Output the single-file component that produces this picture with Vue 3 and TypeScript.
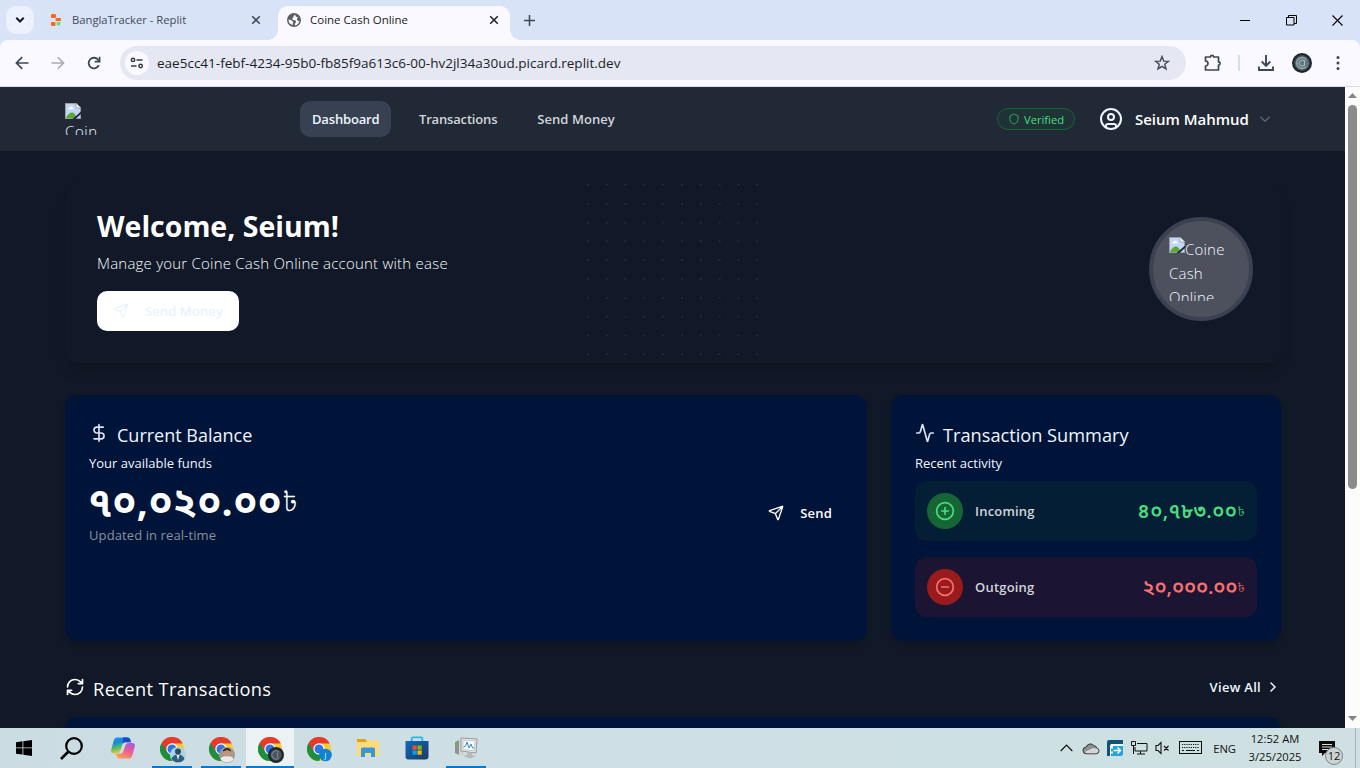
<script setup lang="ts">
interface Flow {
  label: string
  amount: string
  kind: 'in' | 'out'
}

interface Task {
  id: string
  icon: 'chrome' | 'folder' | 'store' | 'monitor'
  badge?: 'man' | 'face' | 'coin' | 'letter'
  state?: 'open' | 'active'
}

const navItems: string[] = ['Dashboard', 'Transactions', 'Send Money']

const flows: Flow[] = [
  { label: 'Incoming', amount: '৪০,৭৮৩.০০', kind: 'in' },
  { label: 'Outgoing', amount: '২০,০০০.০০', kind: 'out' },
]

const tasks: Task[] = [
  { id: 'c1', icon: 'chrome', badge: 'man', state: 'open' },
  { id: 'c2', icon: 'chrome', badge: 'face', state: 'open' },
  { id: 'c3', icon: 'chrome', badge: 'coin', state: 'active' },
  { id: 'c4', icon: 'chrome', badge: 'letter' },
  { id: 'files', icon: 'folder' },
  { id: 'store', icon: 'store' },
  { id: 'perf', icon: 'monitor', state: 'open' },
]
</script>

<template>
  <div class="screen">
    <!-- Shared symbols -->
    <svg class="defs" width="0" height="0">
      <defs>
        <symbol id="broken" viewBox="0 0 16 16">
          <path d="M0 0h11l5 5v11H0z" fill="#9a9d9c" />
          <path d="M1 1h9.500L15 5.500V15H1z" fill="#c3d6f7" />
          <path d="M3 6.200q0-1.500 1.600-1.400Q5.300 3 6.800 3.600 8 4 8 5.200q1 .1.900 1z" fill="#fff" />
          <path d="M1 15q2.500-5.500 6-5.500 3 0 4.500 5.500z" fill="#57ab35" />
          <path d="M16 8.500V11l-5.500 5H7.500z" fill="#202938" />
          <path d="M11 0v5h5z" fill="#f4f7fb" stroke="#9a9d9c" stroke-width=".8" />
        </symbol>
        <symbol id="send" viewBox="0 0 24 24">
          <path
            d="M14.536 21.686a.5.5 0 0 0 .937-.024l6.500-19a.496.496 0 0 0-.635-.635l-19 6.500a.5.5 0 0 0-.024.937l7.930 3.180a2 2 0 0 1 1.112 1.110zM21.854 2.147l-10.940 10.939"
            fill="none" stroke="currentColor" stroke-width="2" stroke-linecap="round" stroke-linejoin="round" />
        </symbol>
        <symbol id="close" viewBox="0 0 10 10">
          <path d="M1.200 1.200l7.600 7.600M8.800 1.200L1.200 8.800" fill="none" stroke="currentColor" stroke-width="1.600" />
        </symbol>
        <linearGradient id="cpA" x1="0" y1="0" x2=".3" y2="1">
          <stop offset="0" stop-color="#1a9bf0" /><stop offset=".35" stop-color="#1489d8" />
          <stop offset=".65" stop-color="#4fb96c" /><stop offset="1" stop-color="#f3cb2c" />
        </linearGradient>
        <linearGradient id="cpB" x1=".8" y1="0" x2=".3" y2="1">
          <stop offset="0" stop-color="#a857e8" /><stop offset=".5" stop-color="#ee5d8e" />
          <stop offset="1" stop-color="#ffa052" />
        </linearGradient>
        <linearGradient id="bag" x1="0" y1="0" x2="1" y2="1">
          <stop offset="0" stop-color="#0f6cbd" /><stop offset="1" stop-color="#1f3864" />
        </linearGradient>
      </defs>
    </svg>

    <!-- Browser tabs -->
    <header class="tabstrip">
      <button class="tab-search">
        <svg width="10" height="8" viewBox="0 0 10 8"><path d="M1.300 1.800L5 5.500l3.700-3.700" fill="none" stroke="#15191f" stroke-width="2" /></svg>
      </button>
      <div class="tab">
        <svg width="12" height="14" viewBox="0 0 12 14">
          <rect x="1" y="1" width="5" height="4" rx="1" fill="#fb6a12" />
          <rect x="5.500" y="5" width="5.500" height="3" rx="1" fill="#fb6a12" />
          <rect x="1" y="9" width="4.500" height="4" rx="1" fill="#fb6a12" />
          <circle cx="8.500" cy="10.700" r="2.100" fill="#6bdc86" />
        </svg>
        <span class="tab-title muted">BanglaTracker - Replit</span>
        <svg class="x muted" width="10" height="10"><use href="#close" /></svg>
      </div>
      <div class="tab active">
        <svg width="14" height="14" viewBox="0 0 14 14">
          <circle cx="7" cy="7" r="7" fill="#5c6066" />
          <path d="M8.200 1.800L6.400 3.200v1.500L5 5.400l1 1.500 2.600.5.500 1.700-1.200 1.700v1.600a5.600 5.600 0 0 0 4.500-4.200l-1.800-.5L9.800 6l1.200-1.500L8.800 3.600z" fill="#faf9ff" />
          <path d="M1.500 6.600l3 .6 1.800 2-.6 1.200.3 1.700A5.600 5.600 0 0 1 1.500 6.600z" fill="#faf9ff" />
        </svg>
        <span class="tab-title">Coine Cash Online</span>
        <svg class="x" width="10" height="10"><use href="#close" /></svg>
      </div>
      <svg class="new-tab" width="11" height="11" viewBox="0 0 11 11"><path d="M5.500 0v11M0 5.500h11" stroke="#3f4650" stroke-width="1.500" /></svg>
      <div class="win">
        <svg width="11" height="10" viewBox="0 0 11 10"><path d="M0 5.500h10" stroke="#000" /></svg>
        <svg width="11" height="11" viewBox="0 0 11 11"><path d="M.5 2.500h7.500v7.500H.5zM2.500 2.500V.5h8V8.500H8" fill="none" stroke="#000" /></svg>
        <svg width="11" height="11" viewBox="0 0 11 11"><path d="M.5.5l10 10M10.500.5l-10 10" stroke="#000" stroke-width="1.100" /></svg>
      </div>
    </header>

    <!-- Address bar -->
    <div class="toolbar-wrap">
      <div class="toolbar">
        <div class="nav-buttons">
          <svg width="14" height="14" viewBox="0 0 14 14"><path d="M13.500 7H1.500M7.200 1.200L1.400 7l5.800 5.800" fill="none" stroke="#3e4654" stroke-width="1.700" /></svg>
          <svg width="14" height="14" viewBox="0 0 14 14"><path d="M.5 7h12M6.800 1.200L12.600 7l-5.800 5.800" fill="none" stroke="#a9abb2" stroke-width="1.600" /></svg>
          <svg width="14" height="14" viewBox="0 0 14 14"><path d="M11.800 9.200A5.300 5.300 0 1 1 11.300 4L12.300 5.200" fill="none" stroke="#3e4654" stroke-width="1.800" /><path d="M12.600.8v4.900H7.700" fill="none" stroke="#3e4654" stroke-width="1.700" /></svg>
        </div>
        <div class="omnibox">
          <span class="site-info">
            <svg width="14" height="12" viewBox="0 0 14 12" fill="none" stroke="#353b45" stroke-width="1.500">
              <circle cx="3" cy="2.900" r="1.700" /><path d="M6.500 2.900h6M1 9h5.500" /><circle cx="10.600" cy="9" r="1.700" />
            </svg>
          </span>
          <span class="url">eae5cc41-febf-4234-95b0-fb85f9a613c6-00-hv2jl34a30ud.picard.replit.dev</span>
          <svg class="star" width="16" height="16" viewBox="0 0 16 16"><path d="M8 1.600l1.700 4.500 4.800.2-3.800 3 1.300 4.600L8 11.300l-4 2.600 1.300-4.600-3.800-3 4.800-.2z" fill="none" stroke="#454b56" stroke-width="1.400" /></svg>
        </div>
        <div class="actions">
          <svg width="18" height="18" viewBox="0 0 18 18"><path d="M2.500 3h4.900a1.600 1.600 0 0 1 3.200 0h4.900v4.900a1.600 1.600 0 0 1 0 3.200V16h-13v-4a2.400 2.400 0 0 0 0-5z" fill="none" stroke="#3e4654" stroke-width="1.700" stroke-linejoin="round" /></svg>
          <i class="bar"></i>
          <svg width="18" height="18" viewBox="0 0 18 18"><path d="M9 1v10.500M4.700 7.500L9 11.800l4.300-4.300M2 12.500V16h14v-3.500" fill="none" stroke="#3e4654" stroke-width="1.900" /></svg>
          <svg width="20" height="20" viewBox="0 0 20 20"><circle cx="10" cy="10" r="10" fill="#1d262e" /><circle cx="10" cy="10" r="7" fill="#667780" /><path d="M14 6a5.500 5.500 0 1 0 0 8M12.500 8.200a3 3 0 1 0 0 3.700M12.500 7v6" fill="none" stroke="#a9b7bd" /><circle cx="10" cy="10" r="7.500" fill="none" stroke="#3a4a54" /></svg>
          <svg width="4" height="16" viewBox="0 0 4 16" fill="#3e4654"><circle cx="2" cy="2.500" r="1.500" /><circle cx="2" cy="8" r="1.500" /><circle cx="2" cy="13.500" r="1.500" /></svg>
        </div>
      </div>
    </div>

    <!-- Page -->
    <div class="viewport">
      <div class="page">
        <nav class="navbar">
          <div class="logo">
            <svg width="16" height="16"><use href="#broken" /></svg>
            <span>Coin</span>
          </div>
          <ul class="menu">
            <li v-for="(item, i) in navItems" :key="item" :class="{ current: i === 0 }">{{ item }}</li>
          </ul>
          <span class="verified">
            <svg width="12" height="12" viewBox="0 0 24 24" fill="none" stroke="currentColor" stroke-width="2"><path d="M20 13c0 5-3.500 7.500-7.660 8.950a1 1 0 0 1-.67-.01C7.500 20.500 4 18 4 13V6a1 1 0 0 1 1-1c2 0 4.500-1.200 6.240-2.720a1.170 1.170 0 0 1 1.520 0C14.510 3.810 17 5 19 5a1 1 0 0 1 1 1z" /></svg>
            Verified
          </span>
          <svg class="avatar" width="24" height="24" viewBox="0 0 24 24" fill="none" stroke="currentColor" stroke-width="2"><circle cx="12" cy="12" r="10" /><circle cx="12" cy="10" r="3" /><path d="M7 20.662V19a2 2 0 0 1 2-2h6a2 2 0 0 1 2 2v1.662" /></svg>
          <span class="user">Seium Mahmud</span>
          <svg class="caret" width="16" height="16" viewBox="0 0 24 24" fill="none" stroke="currentColor" stroke-width="2"><path d="m5 8.500 7 7 7-7" /></svg>
        </nav>

        <main class="content">
          <section class="hero">
            <svg class="dots" width="190" height="180">
              <defs>
                <pattern id="dot" width="18.800" height="18.800" patternUnits="userSpaceOnUse">
                  <circle cx="1.900" cy="1.900" r="0.940" fill="#fff" />
                </pattern>
              </defs>
              <rect width="188" height="180" fill="url(#dot)" />
            </svg>
            <div class="greeting">
              <h1>Welcome, Seium!</h1>
              <p>Manage your Coine Cash Online account with ease</p>
              <button class="hero-send">
                <svg width="16" height="16"><use href="#send" /></svg>
                Send Money
              </button>
            </div>
            <div class="medal">
              <div class="medal-alt"><svg width="16" height="16"><use href="#broken" /></svg>Coine Cash Online</div>
            </div>
          </section>

          <div class="cards">
            <section class="card">
              <h2>
                <svg width="20" height="20" viewBox="0 0 24 24" fill="none" stroke="currentColor" stroke-width="2" stroke-linecap="round"><path d="M12 2v20M17 5H9.500a3.500 3.500 0 0 0 0 7h5a3.500 3.500 0 0 1 0 7H6" /></svg>
                <span>Current Balance</span>
              </h2>
              <p class="sub">Your available funds</p>
              <div class="balance-row">
                <div>
                  <div class="balance">৭০,০২০.০০<span>৳</span></div>
                  <p class="updated">Updated in real-time</p>
                </div>
                <button class="send">
                  <svg width="16" height="16"><use href="#send" /></svg>
                  Send
                </button>
              </div>
            </section>

            <section class="card">
              <h2 class="wide">
                <svg width="20" height="20" viewBox="0 0 24 24" fill="none" stroke="currentColor" stroke-width="2" stroke-linecap="round" stroke-linejoin="round"><path d="M22 12h-2.480a2 2 0 0 0-1.930 1.460l-2.350 8.360a.25.25 0 0 1-.48 0L9.240 2.180a.25.25 0 0 0-.48 0l-2.350 8.360A2 2 0 0 1 4.490 12H2" /></svg>
                <span>Transaction Summary</span>
              </h2>
              <p class="sub">Recent activity</p>
              <div v-for="flow in flows" :key="flow.label" class="flow" :class="flow.kind">
                <span class="disc">
                  <svg width="20" height="20" viewBox="0 0 24 24" fill="none" stroke="currentColor" stroke-width="2" stroke-linecap="round">
                    <circle cx="12" cy="12" r="10" /><path d="M8 12h8" /><path v-if="flow.kind === 'in'" d="M12 8v8" />
                  </svg>
                </span>
                <span class="flow-label">{{ flow.label }}</span>
                <span class="flow-amount">{{ flow.amount }}<span>৳</span></span>
              </div>
            </section>
          </div>

          <div class="recent">
            <svg width="20" height="20" viewBox="0 0 24 24" fill="none" stroke="currentColor" stroke-width="2" stroke-linecap="round" stroke-linejoin="round"><path d="M3 12a9 9 0 0 1 9-9 9.750 9.750 0 0 1 6.740 2.740L21 8M21 3v5h-5M21 12a9 9 0 0 1-9 9 9.750 9.750 0 0 1-6.740-2.740L3 16M8 16H3v5" /></svg>
            <h2>Recent Transactions</h2>
            <a>View All
              <svg width="16" height="16" viewBox="0 0 24 24" fill="none" stroke="currentColor" stroke-width="2.200" stroke-linecap="round"><path d="m9 18 6-6-6-6" /></svg>
            </a>
          </div>
          <section class="card next"></section>
        </main>
      </div>
      <div class="scrollbar">
        <svg width="9" height="5" viewBox="0 0 9 5"><path d="M0 5L4.500 0 9 5z" fill="#858585" /></svg>
        <i></i>
        <svg class="down" width="9" height="5" viewBox="0 0 9 5"><path d="M0 0l4.500 5L9 0z" fill="#858585" /></svg>
      </div>
    </div>

    <!-- Taskbar -->
    <footer class="taskbar">
      <div class="task start">
        <svg width="16" height="16" viewBox="0 0 16 16"><path d="M0 2.200l6.500-.9v6.200H0zM7.300 1.200L16 0v7.500H7.300zM0 8.300h6.500v6.300L0 13.700zM7.300 8.300H16V16l-8.700-1.200z" /></svg>
      </div>
      <div class="task search">
        <svg width="23" height="23" viewBox="0 0 23 23" fill="none" stroke="#000" stroke-width="2.200"><circle cx="14" cy="9" r="7.800" /><path d="M8.500 14.500L1 22" stroke-width="2.600" /></svg>
      </div>
      <div class="task copilot">
        <svg width="26" height="24" viewBox="0 0 26 24">
          <path d="M7 1.500h10.500q2 0 2.700 2l.8 2.700H15q-2 0-2.600 2L10 15.500q-.8 2-3 2H4q-3.500 0-2.800-3.500L3.600 5Q4.500 1.500 7 1.500z" fill="url(#cpA)" />
          <path d="M13 1.500h4.500q2 0 2.700 2l.8 2.700h-6q-1.500 0-2.300 1.500z" fill="#1c47c7" />
          <path d="M19 22.500H9.500q-2 0-2.700-2L6 17.700h4.500q2 0 2.700-2L15.500 9q.7-2 3-2H22q3.500 0 2.800 3.500L22.400 19q-.9 3.500-3.400 3.500z" fill="url(#cpB)" />
        </svg>
      </div>
      <div v-for="task in tasks" :key="task.id" class="task" :class="task.state">
        <svg v-if="task.icon === 'chrome'" class="chrome" width="26" height="26" viewBox="0 0 26 26">
          <circle cx="12" cy="12" r="12" fill="#fcc934" />
          <path d="M12 12L1.600 6A12 12 0 0 0 12 24l5.200-9z" fill="#1e8e3e" />
          <path d="M12 6.500h10.700A12 12 0 0 0 1.600 6l5.600 9L12 12z" fill="#e33b2e" />
          <circle cx="12" cy="12" r="5.700" fill="#fff" />
          <circle cx="12" cy="12" r="4.500" fill="#2a76e8" />
          <g v-if="task.badge === 'man'">
            <circle cx="18" cy="18" r="8" fill="#a9d3e6" /><circle cx="18" cy="14.500" r="3" fill="#33495a" /><path d="M11.500 22q1.500-4.500 6.500-4.500t6.500 4.500a8 8 0 0 1-13 0z" fill="#2f5f7e" /><path d="M16.500 18h3l-1.500 5z" fill="#e8f1f5" />
          </g>
          <g v-else-if="task.badge === 'face'">
            <circle cx="18" cy="18" r="8" fill="#a29a90" /><circle cx="18" cy="16" r="3.700" fill="#c3967a" /><path d="M13.800 14.500q.5-3.500 4.200-3.500t4.200 3.500l-4-1.500z" fill="#322a27" /><path d="M11.500 22q1.500-3.500 6.500-2.500 5-1 6.500 2.500a8 8 0 0 1-13 0z" fill="#e9ebee" />
          </g>
          <g v-else-if="task.badge === 'coin'">
            <circle cx="18" cy="18" r="8" fill="#20282e" /><circle cx="18" cy="18" r="5.500" fill="#4b565c" /><path d="M21 15a4.200 4.200 0 1 0 0 6M19.500 15.500v5" fill="none" stroke="#7c898f" />
          </g>
          <g v-else>
            <circle cx="18.500" cy="18" r="6.300" fill="#0f83cf" /><text x="18.500" y="20.600" class="badge-letter">J</text>
          </g>
        </svg>
        <svg v-else-if="task.icon === 'folder'" width="22" height="20" viewBox="0 0 22 20">
          <path d="M0 1h8l2 2h12v15H0z" fill="#e0a21b" /><path d="M0 4h9l2-1.500h11V18H0z" fill="#ffdc73" /><path d="M4 19v-8q0-1.500 1.500-1.500h11Q18 9.500 18 11v8h-4v-4H8v4z" fill="#3a95dd" />
        </svg>
        <svg v-else-if="task.icon === 'store'" width="24" height="24" viewBox="0 0 24 24">
          <path d="M6.700 6V2.500Q6.700 1.300 8 1.300h8q1.300 0 1.300 1.200V6" fill="none" stroke="#23b7ee" stroke-width="1.800" /><path d="M.5 5h23v15.500q0 3-3 3h-17q-3 0-3-3z" fill="url(#bag)" /><path d="M7.500 9.500h4.200v4.200H7.500z" fill="#f25022" /><path d="M12.500 9.500h4.200v4.200h-4.200z" fill="#7fba00" /><path d="M7.500 14.500h4.200v4.200H7.500z" fill="#00a4ef" /><path d="M12.500 14.500h4.200v4.200h-4.200z" fill="#ffb900" />
        </svg>
        <svg v-else width="24" height="24" viewBox="0 0 24 24">
          <path d="M1 6l4-2v15l-4-2z" fill="#8d9494" /><path d="M5 4h5v15H5z" fill="#cfd3d2" /><path d="M2 7v2" stroke="#4ec22d" stroke-width="1.500" />
          <path d="M7 2l16 1-1 14-15-2z" fill="#e7e8e6" stroke="#8d9292" stroke-width=".9" /><path d="M9 4l12 .8-.8 10L9 13.500z" fill="#f8fcff" stroke="#a8adad" stroke-width=".6" /><path d="M9.500 11l2-1 1.500-4 2 6 2-4 1.500 4 1.500 0" fill="none" stroke="#2a8fd0" />
          <path d="M13 16l5 1v2l4 1-6 2.500L9 20l4-1z" fill="#b5b9b9" />
        </svg>
      </div>

      <div class="tray">
        <svg width="13" height="8" viewBox="0 0 13 8"><path d="M.7 7l5.800-5.800L12.300 7" fill="none" stroke="#111" stroke-width="1.200" /></svg>
        <svg class="cloud" width="18" height="13" viewBox="0 0 18 13"><path d="M4.500 11.800h9.500a3 3 0 0 0 .7-5.900 2.700 2.700 0 0 0-2.700-2.100A4.400 4.400 0 0 0 4.200 5 3.400 3.400 0 0 0 4.500 11.800z" fill="#8d8f91" stroke="#333" /><path d="M4.500 11.200h9.500a2.500 2.500 0 0 0 1.500-4.400L11 6 2.500 10z" fill="#d4d6d6" /></svg>
        <svg class="snip" width="16" height="16" viewBox="0 0 16 16"><path d="M0 16V2q0-2 2-2h14v4H4v12z" fill="#11517c" /><path d="M3 16V6q0-2 2-2h11v2H6v10z" fill="#f6fbfd" /><path d="M6 6h10v8q0 2-2 2H4v-2.500h2z" fill="#21a5e0" /><path d="M4 8.500h2v3H4z" fill="#21a5e0" /><path d="M6.500 10.500h7M10.500 7.500l3 3-3 3" stroke="#fff" stroke-width="1.500" fill="none" /></svg>
        <svg class="net" width="17" height="14" viewBox="0 0 17 14" fill="none" stroke="#111"><path d="M6 2.500h10v7.500H4V6M9.500 10v3M6 13h8M.5.500h4v4h-4zM2.500 4.500V13" /></svg>
        <svg class="vol" width="15" height="14" viewBox="0 0 15 14" fill="none" stroke="#111"><path d="M1 4.500h2l3-3v11l-3-3H1zM9 5l4.500 4.500M13.500 5L9 9.500" stroke-width="1.100" /></svg>
        <svg class="keys" width="23" height="14" viewBox="0 0 23 14" fill="none" stroke="#111"><rect x=".5" y=".5" width="22" height="12" /><path d="M3 3.500h17M3 6.500h17" stroke-dasharray="1.200 1" /><path d="M3 9.500h2M7 9.500h9M18 9.500h2" /></svg>
        <span class="lang">ENG</span>
        <div class="clock"><span>12:52 AM</span><span>3/25/2025</span></div>
        <div class="notice">
          <svg width="16" height="15" viewBox="0 0 16 15"><path d="M0 0h16v12H6l-3 3v-3H0z" fill="#0b0b0b" /><path d="M3 3.500h10M3 6h10M3 8.500h7" stroke="#d0e0e3" /></svg>
          <span class="count">12</span>
        </div>
      </div>
    </footer>
  </div>
</template>

<style>
body {
  overflow: hidden;
}
</style>

<style scoped>
* {
  box-sizing: border-box;
}
h1, h2, p, ul {
  margin: 0;
  padding: 0;
  font-weight: 400;
}
button {
  border: 0;
  padding: 0;
  font: inherit;
}
svg {
  display: block;
  flex: none;
}
.defs {
  position: absolute;
}
.screen {
  width: 1360px;
  height: 768px;
  display: flex;
  flex-direction: column;
  overflow: hidden;
  font-family: "Open Sans", "Noto Sans", "Noto Sans Bengali", sans-serif;
  white-space: nowrap;
}

/* Tabs */
.tabstrip {
  height: 40px;
  flex: none;
  display: flex;
  align-items: center;
  background: #d8e3f8;
  padding-left: 6px;
}
.tab-search {
  width: 28px;
  height: 28px;
  border-radius: 10px;
  background: #edf1fe;
  display: grid;
  place-items: center;
}
.tab {
  position: relative;
  display: flex;
  align-items: center;
  width: 232px;
  height: 34px;
  align-self: flex-end;
  padding: 0 11px 6px 10px;
}
.tab:not(.active) {
  margin-left: 6px;
  width: 238px;
  padding-right: 17px;
}
.tab.active {
  background: #faf9ff;
  border-radius: 10px 10px 0 0;
  padding-left: 9px;
}
.tab.active::before,
.tab.active::after {
  content: "";
  position: absolute;
  bottom: 0;
  width: 10px;
  height: 10px;
}
.tab.active::before {
  left: -10px;
  background: radial-gradient(circle at 0 0, transparent 9.500px, #faf9ff 10px);
}
.tab.active::after {
  right: -10px;
  background: radial-gradient(circle at 100% 0, transparent 9.500px, #faf9ff 10px);
}
.tab-title {
  margin-left: 9px;
  font-size: 11.500px;
  line-height: 16px;
  color: #1d2026;
  flex: 1;
}
.tab-title.muted {
  margin-left: 10px;
  font-size: 11.250px;
  color: #424a59;
}
.x {
  color: #22262c;
}
.x.muted {
  color: #454e5c;
}
.new-tab {
  margin-left: 14px;
}
.win {
  margin-left: auto;
  margin-right: 17px;
  display: flex;
  align-items: center;
  gap: 35px;
}

/* Toolbar */
.toolbar-wrap {
  flex: none;
  background: #d8e3f8;
}
.toolbar {
  height: 47px;
  display: flex;
  align-items: center;
  background: #faf9ff;
  border-radius: 8px 8px 0 0;
  box-shadow: inset 0 -1px 0 #d9dbe6;
  padding: 0 0 1px 15px;
}
.nav-buttons {
  display: flex;
  gap: 22px;
  width: 105px;
}
.omnibox {
  width: 1066px;
  height: 34px;
  border-radius: 17px;
  background: #e5e8f3;
  display: flex;
  align-items: center;
  padding: 0 16px 0 5px;
}
.site-info {
  width: 24px;
  height: 24px;
  border-radius: 50%;
  background: #faf9ff;
  display: grid;
  place-items: center;
}
.url {
  flex: 1;
  margin-left: 8px;
  font-size: 13.520px;
  color: #1b1e25;
}
.actions {
  display: flex;
  align-items: center;
  margin-left: 17px;
}
.bar {
  width: 2px;
  height: 16px;
  background: #cfdefa;
  margin: 0 17px;
}
.actions svg:nth-of-type(3) {
  margin-left: 17px;
}
.actions svg:nth-of-type(4) {
  margin-left: 24px;
}

/* Viewport */
.viewport {
  height: 641px;
  flex: none;
  display: flex;
  overflow: hidden;
}
.page {
  width: 1345px;
  height: 641px;
  background: #111827;
  color: #fff;
  overflow: hidden;
}
.scrollbar {
  width: 15px;
  background: #fcfcfc;
  display: flex;
  flex-direction: column;
  align-items: center;
  padding: 6px 0 7px;
}
.scrollbar i {
  width: 9px;
  height: 384px;
  margin-top: 7px;
  border-radius: 5px;
  background: #8b8b8b;
}
.scrollbar .down {
  margin-top: auto;
}

.navbar {
  height: 64px;
  background: #212936;
  padding: 0 72px 0 65px;
  display: flex;
  align-items: center;
}
.logo {
  width: 32px;
  height: 32px;
  overflow: hidden;
  font-size: 15px;
  font-weight: 300;
  line-height: 24px;
  letter-spacing: 0.6px;
  color: #eff6ff;
}
.menu {
  display: flex;
  list-style: none;
  gap: 16px;
  margin-left: 203px;
  margin-right: auto;
}
.menu li {
  height: 36px;
  line-height: 36px;
  padding: 0 12px;
  border-radius: 10px;
  font-size: 13px;
  font-weight: 600;
  letter-spacing: -0.17px;
  color: #d1d5db;
}
.menu li:nth-child(3) {
  letter-spacing: 0.05px;
}
.menu .current {
  width: 91px;
  background: #374151;
  color: #eff6ff;
}
.verified {
  display: flex;
  align-items: center;
  gap: 4px;
  width: 78px;
  height: 22px;
  padding-left: 10px;
  border: 1px solid #166534;
  border-radius: 11px;
  background: #1e3335;
  color: #4ade80;
  font-size: 11.200px;
}
.verified svg {
  color: #35a862;
}
.avatar {
  margin-left: 24px;
  color: #eff6ff;
}
.user {
  width: 114px;
  margin-left: 12px;
  font-size: 15px;
  font-weight: 600;
  letter-spacing: -0.02px;
}
.caret {
  margin-left: 8px;
  color: #5d6573;
}

.content {
  padding: 32px 64px 0 65px;
}
.hero {
  position: relative;
  height: 180px;
  border-radius: 12px;
  background: #111827;
  box-shadow: 0 10px 15px -3px rgba(0, 0, 0, 0.1), 0 4px 6px -4px rgba(0, 0, 0, 0.1);
  padding: 24px 28px 0 32px;
  display: flex;
  justify-content: space-between;
}
.dots {
  position: absolute;
  left: 521px;
  top: 0;
  opacity: 0.11;
}
.greeting {
  position: relative;
}
.greeting h1 {
  font-size: 28.500px;
  font-weight: 700;
  line-height: 38px;
}
.greeting p {
  margin-top: 6px;
  font-size: 15px;
  font-weight: 300;
  line-height: 24px;
  letter-spacing: 0.220px;
  color: #f8fbff;
}
.hero-send {
  margin-top: 16px;
  width: 142px;
  height: 40px;
  border-radius: 10px;
  background: #fff;
  color: #eaf2fe;
  display: flex;
  align-items: center;
  padding-left: 16px;
  gap: 16px;
  font-size: 13px;
  font-weight: 600;
  letter-spacing: 0.1px;
}
.medal {
  width: 104px;
  height: 104px;
  margin-top: 10px;
  border-radius: 50%;
  border: 4px solid #3b4150;
  background: #4c515d;
  padding: 16px;
}
.medal-alt {
  width: 64px;
  height: 64px;
  overflow: hidden;
  white-space: normal;
  font-size: 15px;
  font-weight: 300;
  line-height: 24px;
  letter-spacing: 0.2px;
  color: #f4f8ff;
}
.medal-alt svg {
  display: inline-block;
  vertical-align: 2px;
}

.cards {
  display: grid;
  grid-template-columns: 802px 390px;
  gap: 24px;
  margin-top: 32px;
}
.card {
  height: 246px;
  border-radius: 12px;
  background: #001338;
  padding: 24px;
  box-shadow: 0 4px 6px -1px rgba(0, 0, 0, 0.15);
}
.card h2 {
  display: flex;
  gap: 8px;
  height: 32px;
  padding-top: 4px;
  font-size: 18px;
  line-height: 24px;
  color: #eff6ff;
}
.card h2.wide {
  font-size: 18.200px;
}
.card h2 svg {
  color: #dbe3f0;
}
.sub {
  font-size: 13px;
  line-height: 20px;
  margin-top: 2px;
  color: #eff6ff;
}
.balance-row {
  display: flex;
  justify-content: space-between;
  align-items: flex-start;
  height: 82px;
  padding-right: 11px;
}
.balance {
  display: flex;
  align-items: center;
  height: 38px;
  margin-top: 9px;
  margin-left: -1px;
  font-size: 39px;
  font-weight: 700;
  line-height: 38px;
  letter-spacing: 0.6px;
}
.balance span {
  font-size: 27px;
  font-weight: 300;
  letter-spacing: 0;
}
.updated {
  margin-top: 5px;
  font-size: 13px;
  line-height: 20px;
  letter-spacing: 0.1px;
  color: #8a919f;
}
.send {
  display: flex;
  align-items: center;
  gap: 16px;
  margin-top: 31px;
  background: none;
  color: #fff;
  font-size: 13px;
  font-weight: 600;
  line-height: 18px;
  letter-spacing: 0.2px;
}
.flow {
  height: 60px;
  margin-top: 8px;
  border-radius: 12px;
  padding: 0 12px;
  display: flex;
  align-items: center;
}
.flow + .flow {
  margin-top: 16px;
}
.flow.in {
  background: #041f35;
}
.flow.out {
  background: #1b1432;
}
.disc {
  width: 36px;
  height: 36px;
  border-radius: 50%;
  display: grid;
  place-items: center;
}
.in .disc {
  background: #166534;
}
.out .disc {
  background: #991b1b;
}
.in {
  color: #4ade80;
}
.out {
  color: #f87171;
}
.flow-label {
  margin-left: 12px;
  font-size: 13px;
  font-weight: 600;
  letter-spacing: 0.2px;
  color: #d1d5db;
}
.flow-amount {
  margin-left: auto;
  display: flex;
  align-items: center;
  font-size: 20px;
  font-weight: 600;
  line-height: 24px;
  letter-spacing: 0.5px;
}
.out .flow-amount {
  letter-spacing: -0.050px;
}
.flow-amount span {
  font-size: 13px;
  font-weight: 300;
  letter-spacing: 0;
}
.recent {
  display: flex;
  align-items: center;
  height: 28px;
  margin-top: 32px;
}
.recent h2 {
  margin-left: 8px;
  font-size: 18.200px;
  letter-spacing: 0.4px;
  line-height: 28px;
  padding-top: 3px;
}
.recent a {
  margin-left: auto;
  display: flex;
  align-items: center;
  gap: 4px;
  font-size: 13px;
  font-weight: 600;
  letter-spacing: 0.3px;
  color: #eff6ff;
}
.next {
  margin-top: 16px;
}

/* Taskbar */
.taskbar {
  height: 40px;
  flex: none;
  display: flex;
  background: linear-gradient(90deg, #cbdce3, #cfdfe6 40%, #cde1e2 80%, #cfdfe2);
}
.task {
  width: 49px;
  height: 40px;
  display: grid;
  place-items: center;
}
.start {
  width: 48px;
}
.search {
  padding-right: 2px;
}
.copilot {
  width: 50px;
  padding-left: 2px;
}
.task.open {
  background: linear-gradient(#0078d4, #0078d4) center bottom / 40px 2px no-repeat;
}
.task.active {
  background:
    linear-gradient(#0078d4, #0078d4) right bottom / 48px 2px no-repeat,
    linear-gradient(#eaf2f4, #eaf2f4) right top / 48px 100% no-repeat;
}
.chrome {
  margin: 3px 0 0 3px;
}
.badge-letter {
  font-size: 7px;
  fill: #fff;
  text-anchor: middle;
}
.tray {
  margin-left: auto;
  display: flex;
  align-items: center;
  border-right: 1px solid #a7b5b8;
  margin-right: 4px;
  color: #111;
}
.cloud {
  margin-left: 9px;
}
.snip {
  margin-left: 7px;
}
.net {
  margin-left: 8px;
}
.vol {
  margin-left: 7px;
}
.keys {
  margin-left: 9px;
}
.lang {
  margin-left: 11px;
  font-size: 11.200px;
}
.clock {
  width: 60px;
  margin-left: 9px;
  display: flex;
  flex-direction: column;
  align-items: center;
  font-size: 11.200px;
  line-height: 18px;
}
.notice {
  position: relative;
  margin-left: 14px;
  margin-right: 20px;
}
.count {
  position: absolute;
  left: 6px;
  top: 6px;
  width: 18px;
  height: 18px;
  border-radius: 50%;
  border: 1px solid #7e8687;
  background: #cdd3d4;
  font-size: 11px;
  line-height: 16px;
  text-align: center;
}
</style>
